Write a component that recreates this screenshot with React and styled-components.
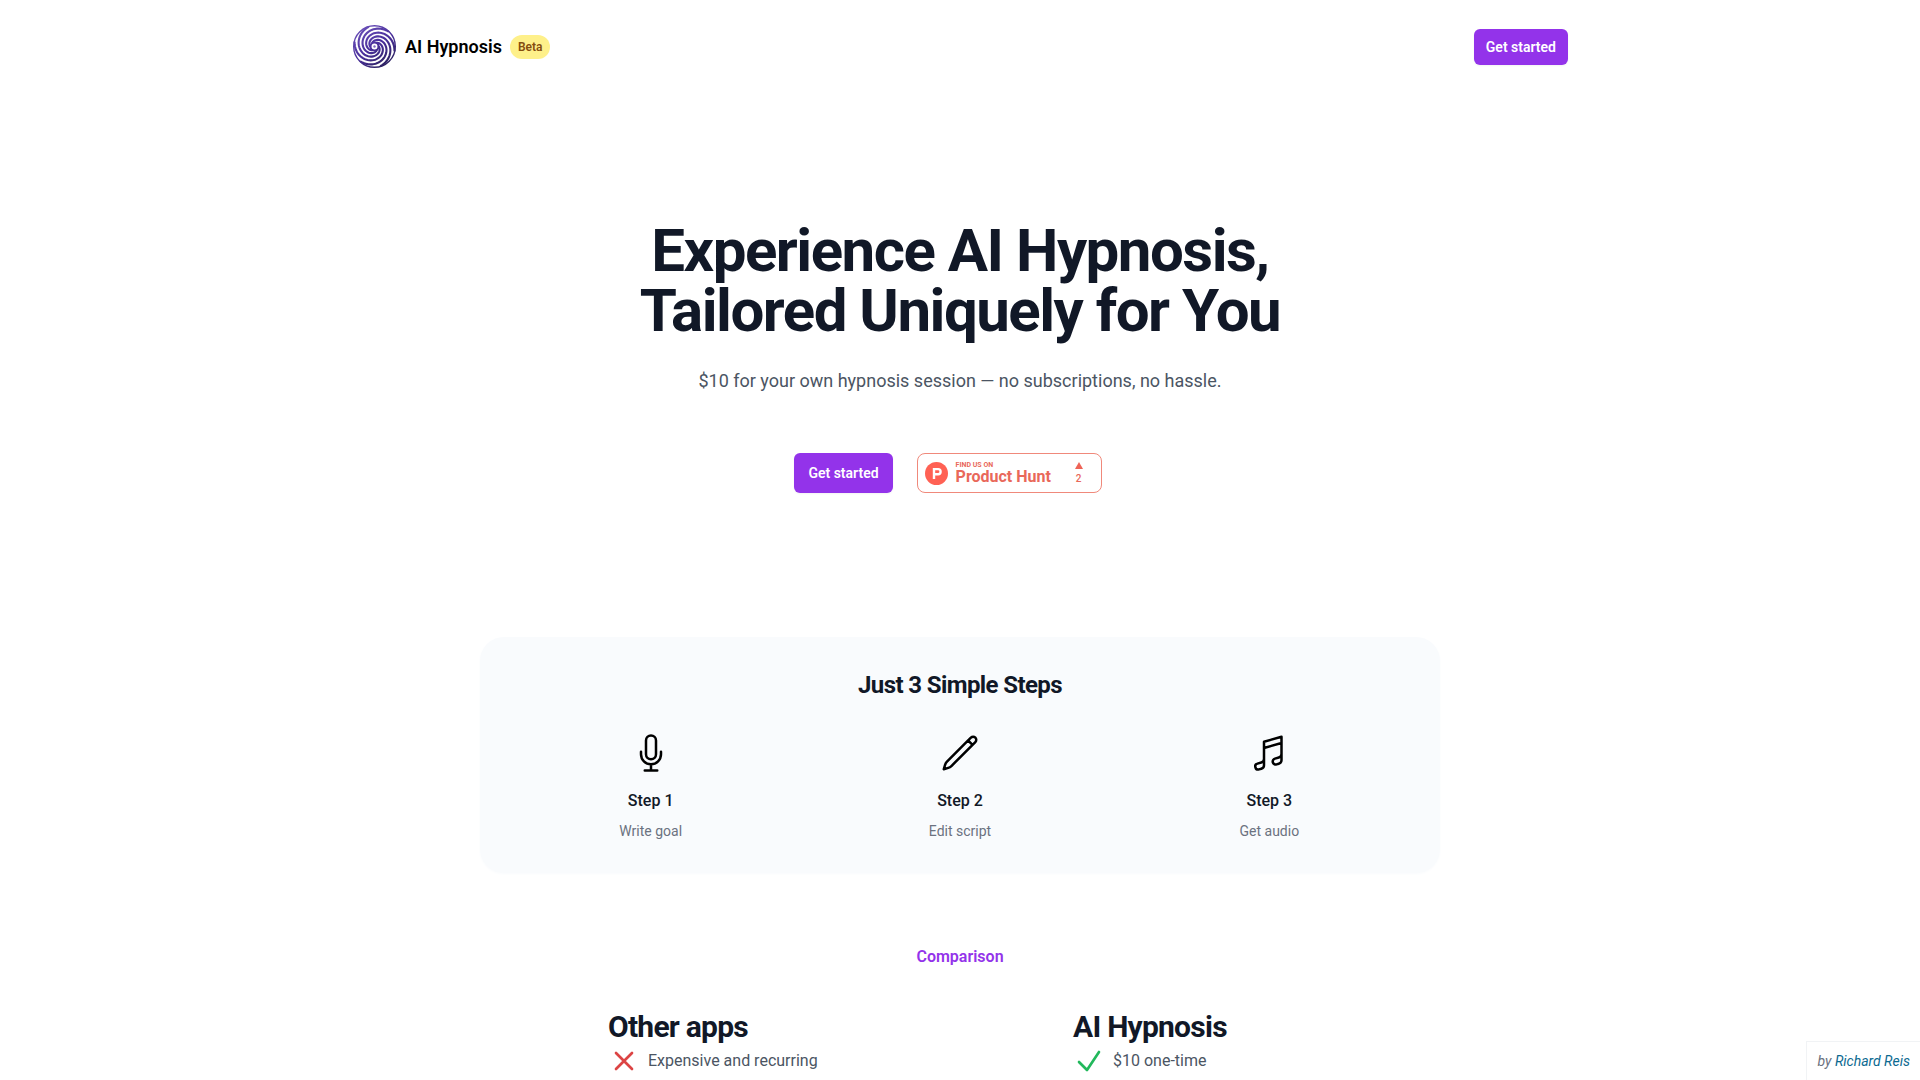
import React from "react";
import styled, { createGlobalStyle } from "styled-components";

const GlobalStyle = createGlobalStyle`
  *, *::before, *::after { box-sizing: border-box; }
  body {
    margin: 0;
    background: #fff;
    color: #111827;
    font-family: Roboto, "Liberation Sans", sans-serif;
    font-size: 16px;
    line-height: 24px;
  }
  h1, h2, h3, p, ul { margin: 0; padding: 0; }
  ul { list-style: none; }
`;

const Header = styled.header`
  max-width: 1280px;
  margin: 0 auto;
  padding: 24px 32px;
  display: flex;
  align-items: center;
  justify-content: space-between;
`;

const Brand = styled.a`
  display: flex;
  align-items: center;
  gap: 8px;
  color: #000;
  font-size: 18px;
  line-height: 28px;
  font-weight: 600;
  text-decoration: none;
`;

const Beta = styled.span`
  padding: 4px 8px;
  border-radius: 12px;
  background: #fef08a;
  color: #854d0e;
  font-size: 12px;
  line-height: 16px;
`;

const Button = styled.button`
  padding: ${(p) => (p.$large ? "10px 14px" : "8px 12px")};
  border: 0;
  border-radius: 6px;
  background: #9333ea;
  color: #fff;
  font-family: inherit;
  font-size: 14px;
  line-height: 20px;
  font-weight: 600;
  box-shadow: 0 1px 2px rgba(0, 0, 0, 0.05);
  cursor: pointer;
`;

const Hero = styled.section`
  padding: 128px 32px;
  text-align: center;
`;

const Title = styled.h1`
  font-size: 60px;
  line-height: 60px;
  font-weight: 700;
  letter-spacing: -0.025em;
`;

const Lead = styled.p`
  margin-top: 24px;
  color: #4b5563;
  font-size: 18px;
  line-height: 32px;
`;

const Actions = styled.div`
  margin-top: 56px;
  padding-right: 24px;
  display: flex;
  align-items: center;
  justify-content: center;
  gap: 24px;
`;

const HuntBadge = styled.a`
  width: 185px;
  height: 40px;
  padding: 0 18px 0 7px;
  display: flex;
  align-items: center;
  gap: 8px;
  border: 1px solid #f0897b;
  border-radius: 8px;
  color: #e9685a;
  font-weight: 700;
  text-decoration: none;
`;

const HuntName = styled.span`
  flex: 1;
  display: flex;
  flex-direction: column;
  text-align: left;
  font-size: 16px;
  line-height: 16px;
`;

const HuntNote = styled.small`
  font-size: 7px;
  line-height: 8px;
`;

const HuntVotes = styled.span`
  display: flex;
  flex-direction: column;
  align-items: center;
  gap: 4px;
  font-size: 10px;
  line-height: 12px;
  font-weight: 500;
`;

const StepsCard = styled.section`
  max-width: 960px;
  margin: 16px auto 0;
  padding: 32px;
  border-radius: 24px;
  background: #f9fbfd;
  box-shadow: 0 1px 3px #f9fbfd;
  text-align: center;
`;

const StepsTitle = styled.h2`
  font-size: 24px;
  line-height: 32px;
  font-weight: 700;
  letter-spacing: -0.025em;
`;

const StepGrid = styled.div`
  margin-top: 32px;
  display: grid;
  grid-template-columns: repeat(3, 1fr);
  gap: 32px;
`;

const Step = styled.div`
  display: flex;
  flex-direction: column;
  align-items: center;
`;

const StepName = styled.h3`
  margin-top: 16px;
  font-size: 16px;
  line-height: 24px;
  font-weight: 500;
`;

const StepText = styled.p`
  margin-top: 8px;
  color: #6b7280;
  font-size: 14px;
  line-height: 20px;
`;

const Comparison = styled.section`
  max-width: 704px;
  margin: 72px auto 0;
`;

const Eyebrow = styled.h2`
  color: #9333ea;
  font-size: 16px;
  line-height: 24px;
  font-weight: 600;
  text-align: center;
`;

const Columns = styled.div`
  margin-top: 40px;
  display: grid;
  grid-template-columns: 1fr 1fr;
  column-gap: 226px;
`;

const ColumnTitle = styled.h3`
  font-size: 30px;
  line-height: 36px;
  font-weight: 700;
  letter-spacing: -0.025em;
  white-space: nowrap;
`;

const Point = styled.li`
  display: flex;
  align-items: center;
  gap: 8px;
  color: #4b5563;
  line-height: 32px;
  white-space: nowrap;
`;

const Credit = styled.aside`
  position: fixed;
  right: 0;
  bottom: 0;
  padding: 9px 10px;
  border: 1px solid #f1f3f5;
  border-right: 0;
  border-bottom: 0;
  background: #fff;
  color: #6b7280;
  font-size: 14px;
  line-height: 20px;
  font-style: italic;

  a {
    color: #0c6a91;
    text-decoration: none;
  }
`;

const Glyph = styled.svg.attrs({ viewBox: "0 0 24 24", "aria-hidden": true })`
  width: ${(p) => p.$size}px;
  height: ${(p) => p.$size}px;
  display: block;
  flex: none;
  fill: none;
  stroke: ${(p) => p.$color || "#000"};
  stroke-width: ${(p) => p.$weight || 1.5};
  stroke-linecap: round;
  stroke-linejoin: round;
`;

const ICONS = {
  mic: "M12 18.75a6 6 0 0 0 6-6v-1.5m-6 7.5a6 6 0 0 1-6-6v-1.5m6 7.5v3.75m-3.75 0h7.5M12 15.75a3 3 0 0 1-3-3V4.5a3 3 0 1 1 6 0v8.25a3 3 0 0 1-3 3Z",
  pencil:
    "m16.862 4.487 1.687-1.688a1.875 1.875 0 1 1 2.652 2.652L6.832 19.82a4.5 4.5 0 0 1-1.897 1.13l-2.685.8.8-2.685a4.5 4.5 0 0 1 1.13-1.897L16.863 4.487Zm0 0L19.5 7.125",
  music:
    "m9 9 10.5-3m0 6.553v3.75a2.25 2.25 0 0 1-1.632 2.163l-1.32.377a1.803 1.803 0 1 1-.99-3.467l2.31-.66a2.25 2.25 0 0 0 1.632-2.163Zm0 0V2.25L9 5.25v10.303m0 0v3.75a2.25 2.25 0 0 1-1.632 2.163l-1.32.377a1.803 1.803 0 0 1-.99-3.467l2.31-.66A2.25 2.25 0 0 0 9 15.553Z",
  cross: "M6 18 18 6M6 6l12 12",
  check: "m4.5 12.75 6 6 9-13.5",
};

const STEPS = [
  { icon: "mic", name: "Step 1", text: "Write goal" },
  { icon: "pencil", name: "Step 2", text: "Edit script" },
  { icon: "music", name: "Step 3", text: "Get audio" },
];

const COLUMNS = [
  { title: "Other apps", icon: "cross", color: "#dc4444", points: ["Expensive and recurring"] },
  { title: "AI Hypnosis", icon: "check", color: "#22b85c", points: ["$10 one-time"] },
];

// One arm of the swirl: radius grows from the hub to the rim while it turns.
function armPath(start) {
  const points = [];
  for (let i = 0; i <= 40; i += 1) {
    const t = i / 40;
    const radius = 4.4 + 16 * t;
    const angle = start + 4.4 * Math.pow(t, 0.9);
    points.push(`${(22.5 + radius * Math.cos(angle)).toFixed(2)} ${(22.5 + radius * Math.sin(angle)).toFixed(2)}`);
  }
  return `M${points.join("L")}`;
}

const ARMS = Array.from({ length: 6 }, (_, i) => armPath((i * Math.PI) / 3));

function Logo() {
  return (
    <svg width="45" height="45" viewBox="0 0 45 45" fill="none" aria-hidden="true">
      <defs>
        <linearGradient id="swirl" x1="8" y1="4" x2="34" y2="42" gradientUnits="userSpaceOnUse">
          <stop stopColor="#6a50b8" />
          <stop offset="0.5" stopColor="#4a2f9c" />
          <stop offset="1" stopColor="#2c2260" />
        </linearGradient>
      </defs>
      <g stroke="url(#swirl)">
        <circle cx="22.5" cy="22.5" r="20.8" strokeWidth="1.4" />
        <circle cx="22.5" cy="22.5" r="4" strokeWidth="2" />
        {ARMS.map((d) => (
          <path key={d} d={d} strokeWidth="2.1" strokeLinecap="round" />
        ))}
      </g>
      <circle cx="22.5" cy="22.5" r="1.2" fill="#7d68c0" />
    </svg>
  );
}

export default function App() {
  return (
    <>
      <GlobalStyle />
      <Header>
        <Brand href="#">
          <Logo />
          AI Hypnosis
          <Beta>Beta</Beta>
        </Brand>
        <Button type="button">Get started</Button>
      </Header>
      <main>
        <Hero>
          <Title>
            Experience AI Hypnosis,
            <br />
            Tailored Uniquely for You
          </Title>
          <Lead>$10 for your own hypnosis session — no subscriptions, no hassle.</Lead>
          <Actions>
            <Button type="button" $large>
              Get started
            </Button>
            <HuntBadge href="#">
              <svg width="23" height="23" viewBox="0 0 23 23" aria-hidden="true">
                <circle cx="11.5" cy="11.5" r="11.5" fill="#ff6154" />
                <path
                  fill="#fff"
                  fillRule="evenodd"
                  d="M7.8 6h5.3a3.7 3.7 0 0 1 0 7.4h-2.9V17H7.8ZM10.2 8.3v2.8h2.8a1.4 1.4 0 0 0 0-2.8Z"
                />
              </svg>
              <HuntName>
                <HuntNote>FIND US ON</HuntNote>
                Product Hunt
              </HuntName>
              <HuntVotes>
                <svg width="8" height="7" viewBox="0 0 8 7" aria-hidden="true">
                  <path d="M4 0 8 7H0Z" fill="#ee6457" />
                </svg>
                2
              </HuntVotes>
            </HuntBadge>
          </Actions>
        </Hero>
        <StepsCard>
          <StepsTitle>Just 3 Simple Steps</StepsTitle>
          <StepGrid>
            {STEPS.map((step) => (
              <Step key={step.name}>
                <Glyph $size={40}>
                  <path d={ICONS[step.icon]} />
                </Glyph>
                <StepName>{step.name}</StepName>
                <StepText>{step.text}</StepText>
              </Step>
            ))}
          </StepGrid>
        </StepsCard>
        <Comparison>
          <Eyebrow>Comparison</Eyebrow>
          <Columns>
            {COLUMNS.map((column) => (
              <div key={column.title}>
                <ColumnTitle>{column.title}</ColumnTitle>
                <ul>
                  {column.points.map((point) => (
                    <Point key={point}>
                      <Glyph $size={32} $color={column.color} $weight={2}>
                        <path d={ICONS[column.icon]} />
                      </Glyph>
                      {point}
                    </Point>
                  ))}
                </ul>
              </div>
            ))}
          </Columns>
        </Comparison>
      </main>
      <Credit>
        by <a href="#">Richard Reis</a>
      </Credit>
    </>
  );
}
